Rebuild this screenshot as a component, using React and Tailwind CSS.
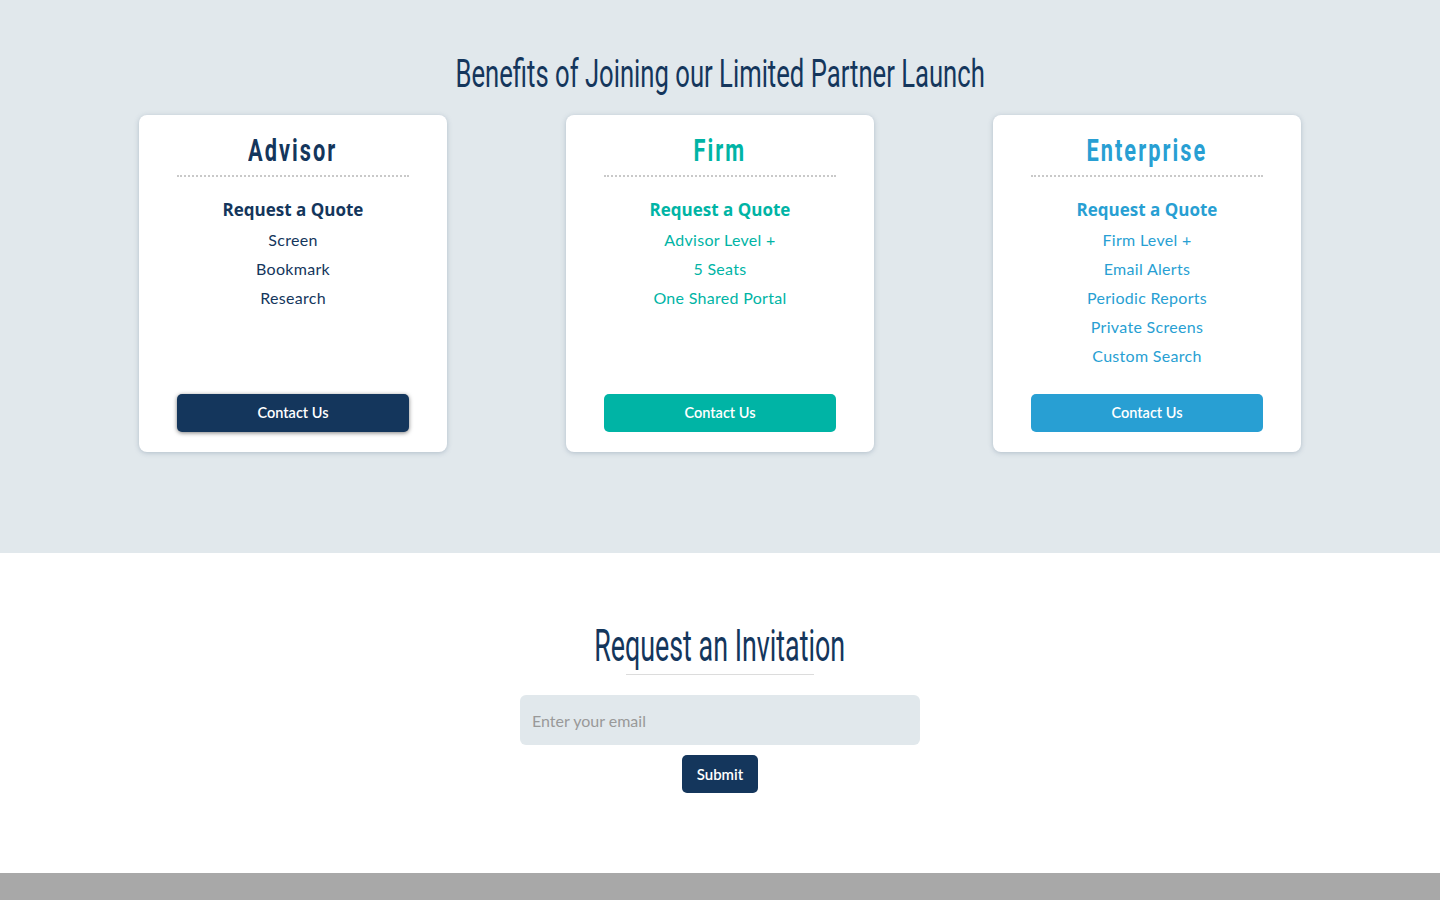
import React from "react";

const head = { fontFamily: 'Roboto, "Liberation Sans", sans-serif' };
const body = { fontFamily: 'Lato, "Open Sans", sans-serif' };

const plans = [
  {
    name: "Advisor",
    text: "text-[#14365c]",
    btn: "bg-[#14365c] shadow-[0_1px_4px_rgba(0,0,0,0.5)]",
    items: ["Screen", "Bookmark", "Research"],
  },
  {
    name: "Firm",
    text: "text-[#00b4a5]",
    btn: "bg-[#00b4a5]",
    items: ["Advisor Level +", "5 Seats", "One Shared Portal"],
  },
  {
    name: "Enterprise",
    text: "text-[#289fd3]",
    btn: "bg-[#289fd3]",
    items: ["Firm Level +", "Email Alerts", "Periodic Reports", "Private Screens", "Custom Search"],
  },
];

function Card({ p }) {
  return (
    <div className="w-[308px] h-[337px] bg-white rounded-lg shadow-[0_1px_5px_rgba(120,140,160,0.45)] flex flex-col px-[38px] pt-[17px] pb-[20px]">
      <h3 className={`text-center text-[32px] leading-[36px] font-bold ${p.text}`} style={head}>
        <span className="inline-block scale-x-[0.68] tracking-[3px]">{p.name}</span>
      </h3>
      <div className="mt-[7px] border-t-2 border-dotted border-[#c9c9c9]" />
      <div className={`mt-[21px] flex flex-col items-center ${p.text}`}>
        <div className="text-[17px] leading-[24px] font-bold" style={{ fontFamily: '"Open Sans", Lato, sans-serif' }}>Request a Quote</div>
        <ul className="mt-[3px] flex flex-col items-center text-[16px] leading-[29px] tracking-[0.3px]" style={body}>
          {p.items.map((it) => (
            <li key={it}>{it}</li>
          ))}
        </ul>
      </div>
      <button className={`mt-auto h-[38px] w-full rounded-[5px] text-white text-[14.5px] font-semibold ${p.btn}`} style={body}>
        Contact Us
      </button>
    </div>
  );
}

export default function App() {
  return (
    <div className="min-h-[900px] flex flex-col bg-white" style={body}>
      <section className="bg-[#e1e8ec] h-[553px] flex flex-col items-center pt-[52px]">
        <h2 className="text-[38px] leading-[44px] text-[#14365c] font-normal whitespace-nowrap" style={head}>
          <span className="inline-block scale-x-[0.675]">Benefits of Joining our Limited Partner Launch</span>
        </h2>
        <div className="mt-[19px] flex gap-[119px]">
          {plans.map((p) => (
            <Card key={p.name} p={p} />
          ))}
        </div>
      </section>
      <section className="h-[320px] flex flex-col items-center pt-[70px]">
        <h2 className="text-[44px] leading-[46px] text-[#14365c] font-normal whitespace-nowrap" style={head}>
          <span className="inline-block scale-x-[0.61]">Request an Invitation</span>
        </h2>
        <div className="mt-[5px] w-[188px] border-t border-[#dcdcdc]" />
        <input
          type="text"
          placeholder="Enter your email"
          className="mt-[20px] w-[400px] h-[50px] rounded-md bg-[#e1e8ec] px-3 text-[16px] text-[#333] placeholder:text-[#999] outline-none"
        />
        <button className="mt-[10px] w-[76px] h-[38px] rounded-[5px] bg-[#14365c] text-white text-[15px] font-semibold">
          Submit
        </button>
      </section>
      <footer className="flex-1 bg-[#a8a8a8] min-h-[27px]" />
    </div>
  );
}
